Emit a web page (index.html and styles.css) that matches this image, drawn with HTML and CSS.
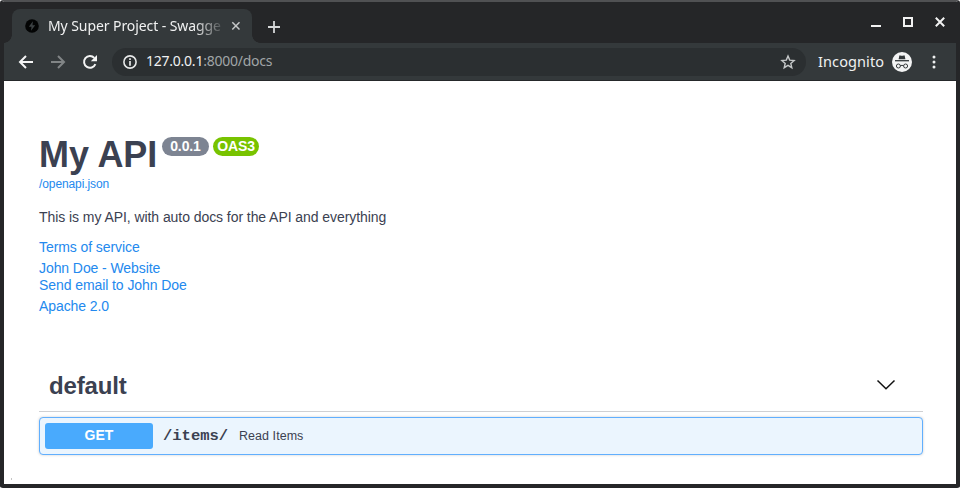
FILE: index.html
```html
<!DOCTYPE html>
<html lang="en">
<head>
<meta charset="utf-8">
<title>My Super Project - Swagger UI</title>
<link rel="stylesheet" href="styles.css">
</head>
<body>
<div class="window">
  <header class="tabbar">
    <div class="tab">
      <svg class="favicon" width="14" height="14" viewBox="0 0 14 14"><circle cx="7" cy="7" r="6.8" fill="#030404"/><path d="M7.900 2.300 3.800 7.700h2.700L6 11.700 10.200 6.200H7.500z" fill="#3c4143"/></svg>
      <span class="tab-title">My Super Project - Swagge</span>
      <svg class="tab-close" width="10" height="10" viewBox="0 0 10 10"><path d="M1.3 1.3l7.2 7.2M8.5 1.3L1.3 8.5" stroke="#c5c7c8" stroke-width="1.5"/></svg>
    </div>
    <svg class="newtab" width="12" height="12" viewBox="0 0 12 12"><path d="M6 0v12M0 6h12" stroke="#d5d7d8" stroke-width="1.8"/></svg>
    <div class="controls">
      <svg width="10" height="12" viewBox="0 0 10 12"><path d="M0 10h10" stroke="#f2f2f2" stroke-width="2"/></svg>
      <svg width="10" height="12" viewBox="0 0 10 12"><path d="M1 2h8v8H1z" fill="none" stroke="#f2f2f2" stroke-width="2"/></svg>
      <svg width="10" height="12" viewBox="0 0 10 12"><path d="M.8 1.8l8.4 8.4M9.2 1.8L.8 10.2" stroke="#f2f2f2" stroke-width="2"/></svg>
    </div>
  </header>
  <nav class="toolbar">
    <svg class="nav-icon" width="16" height="16" viewBox="0 0 16 16"><path d="M15 8H2.500M8 2L2 8l6 6" fill="none" stroke="#f4f5f5" stroke-width="2"/></svg>
    <svg class="nav-icon" width="16" height="16" viewBox="0 0 16 16"><path d="M1 8h12.500M8 2l6 6-6 6" fill="none" stroke="#818586" stroke-width="2"/></svg>
    <svg class="nav-icon" width="16" height="16" viewBox="0 0 16 16"><path d="M13.400 10.200A5.900 5.900 0 1 1 12.300 3.900" fill="none" stroke="#f4f5f5" stroke-width="2"/><path d="M15 1v6.200H8.800z" fill="#f4f5f5"/></svg>
    <div class="omnibox">
      <svg width="14" height="14" viewBox="0 0 14 14"><circle cx="7" cy="7" r="6.1" fill="none" stroke="#e6e8e8" stroke-width="1.6"/><path d="M7 6v4.700M7 3.300v1.600" stroke="#e6e8e8" stroke-width="1.700"/></svg>
      <span class="url"><b>127.0.0.1</b>:8000/docs</span>
      <svg class="star" width="16" height="16" viewBox="0 0 16 16"><path d="M8 2l1.700 4.100 4.400.4-3.300 2.900 1 4.300L8 11.400l-3.800 2.300 1-4.300L1.900 6.500l4.400-.4z" fill="none" stroke="#c5c8c9" stroke-width="1.400"/></svg>
    </div>
    <span class="incognito">Incognito</span>
    <svg class="spy" width="20" height="20" viewBox="0 0 20 20"><circle cx="10" cy="10" r="10" fill="#f3f4f4"/><path d="M6.600 7.200L7.300 3.800q.2-.6.900-.4 1.800.5 3.600 0 .7-.2.900.4l.7 3.400z" fill="#33383a"/><path d="M3 8.700h14" stroke="#33383a" stroke-width="1.300"/><g fill="none" stroke="#33383a" stroke-width="1"><circle cx="6.400" cy="14" r="2"/><circle cx="13.600" cy="14" r="2"/><path d="M8.400 13.700q1.600-.8 3.200 0"/></g></svg>
    <svg class="dots" width="4" height="14" viewBox="0 0 4 14"><g fill="#eef0f0"><circle cx="2" cy="2" r="1.500"/><circle cx="2" cy="7" r="1.500"/><circle cx="2" cy="12" r="1.500"/></g></svg>
  </nav>
  <main class="docs">
    <div class="title-row">
      <h1>My API</h1>
      <span class="badge version">0.0.1</span>
      <span class="badge oas">OAS3</span>
    </div>
    <a class="spec">/openapi.json</a>
    <p class="description">This is my API, with auto docs for the API and everything</p>
    <div class="links">
      <a class="terms">Terms of service</a>
      <a class="site">John Doe - Website</a>
      <a class="mail">Send email to John Doe</a>
      <a class="license">Apache 2.0</a>
    </div>
    <section>
      <div class="section-head">
        <h2>default</h2>
        <svg width="20" height="12" viewBox="0 0 20 12"><path d="M1.500 1.500L10 9.800l8.500-8.300" fill="none" stroke="#111" stroke-width="1.500"/></svg>
      </div>
      <div class="operation">
        <span class="method">GET</span>
        <span class="path">/items/</span>
        <span class="summary">Read Items</span>
      </div>
    </section>
  </main>
</div>
</body>
</html>
```

FILE: styles.css
```css
* { box-sizing: border-box; }
body { margin: 0; background: #fff; font-family: "Liberation Sans", Arial, sans-serif; }
svg { display: block; flex: none; }
h1, h2, p { margin: 0; }

.window {
  position: relative;
  width: 960px;
  height: 488px;
  border: solid #252628;
  border-width: 2px 4px 4px;
  border-top-color: #505153;
  border-radius: 3px;
  background: #fff;
  overflow: hidden;
}
.window::after {
  content: "";
  position: absolute;
  left: 7px;
  bottom: 4px;
  width: 1px;
  height: 2px;
  background: #c4c4c4;
}

.tabbar {
  display: flex;
  height: 41px;
  padding: 8px 11px 0 8px;
  background: #252628;
  font-family: "Noto Sans", sans-serif;
}
.tab {
  position: relative;
  display: flex;
  align-items: center;
  width: 240px;
  height: 33px;
  margin-top: -1px;
  height: 34px;
  padding: 0 11px 1px 13px;
  background: #34393b;
  border-radius: 8px 8px 0 0;
}
.tab::before, .tab::after {
  content: "";
  position: absolute;
  bottom: 0;
  width: 8px;
  height: 8px;
}
.tab::before { left: -8px; background: radial-gradient(circle at 0 0, #252628 7.5px, #34393b 8px); }
.tab::after { right: -8px; background: radial-gradient(circle at 100% 0, #252628 7.5px, #34393b 8px); }
.favicon { margin-right: 9px; }
.tab-title {
  width: 178px;
  white-space: nowrap;
  font-size: 14px;
  line-height: 20px;
  letter-spacing: -0.08px;
  color: #f0f1f1;
  -webkit-mask-image: linear-gradient(90deg, #000 146px, transparent 178px);
  mask-image: linear-gradient(90deg, #000 146px, transparent 178px);
}
.tab-close { margin-left: auto; }
.newtab { margin: 11px 0 0 16px; }
.controls { display: flex; gap: 22px; margin: 6px 0 0 auto; }

.toolbar {
  display: flex;
  align-items: center;
  height: 38px;
  padding: 0 20px 0 14px;
  background: #34393b;
  border-bottom: 1px solid #25282a;
  font-family: "Noto Sans", sans-serif;
}
.nav-icon { margin-right: 16px; }
.omnibox {
  display: flex;
  align-items: center;
  width: 694px;
  height: 28px;
  margin-left: -2px;
  padding: 0 10px 0 11px;
  border-radius: 14px;
  background: #2b2f31;
}
.url { margin: -2px 0 0 9px; font-size: 14px; letter-spacing: -0.24px; color: #a0a5a7; }
.url b { font-weight: 400; color: #f0f1f1; }
.star { margin-left: auto; }
.incognito { width: 67px; margin: -2px 7px 0 12px; font-size: 14.5px; letter-spacing: 0.1px; color: #f0f1f1; }
.dots { margin-left: auto; }

.docs { padding: 53px 33px 0 35px; color: #3b4151; }
.title-row { display: flex; align-items: flex-start; height: 43px; }
h1 { width: 119px; font-size: 36px; line-height: 42px; letter-spacing: -0.1px; white-space: nowrap; }
.badge {
  height: 19px;
  border-radius: 10px;
  color: #fff;
  font-size: 14px;
  font-weight: 700;
  line-height: 18px;
  letter-spacing: -0.1px;
  text-align: center;
}
.version { width: 47px; margin: 3px 4px 0; background: #7d8492; }
.oas { width: 46px; margin-top: 3px; background: #78c300; }
a { display: block; color: #2389ee; }
.spec { height: 14px; font-size: 12px; line-height: 14px; letter-spacing: -0.1px; }
.description { margin-top: 18px; font-size: 14px; line-height: 17px; letter-spacing: -0.065px; }
.links { margin-top: 13px; font-size: 14px; line-height: 16px; letter-spacing: -0.08px; }
.site { margin-top: 5px; }
.mail { margin-top: 1px; }
.license { margin-top: 5px; }
.section-head {
  display: flex;
  align-items: center;
  justify-content: space-between;
  height: 53px;
  margin-top: 45px;
  padding: 0 27px 0 10px;
  border-bottom: 1px solid #cfd0d3;
}
h2 { margin-top: 1px; font-size: 24px; line-height: 28px; letter-spacing: -0.15px; }
.operation {
  display: flex;
  align-items: center;
  height: 38px;
  margin-top: 5px;
  padding: 0 5px 1px;
  border: 1px solid #61affe;
  border-radius: 4px;
  background: #ebf5fe;
  box-shadow: 0 0 3px rgba(0, 0, 0, .19);
}
.method {
  width: 108px;
  height: 26px;
  border-radius: 3px;
  background: #49aafd;
  color: #fff;
  font-size: 14px;
  font-weight: 700;
  line-height: 25px;
  text-align: center;
}
.path { width: 65px; margin: 0 11px 0 10px; font: 700 15.5px "Liberation Mono", monospace; }
.summary { font-size: 12.5px; letter-spacing: 0.05px; }
```
